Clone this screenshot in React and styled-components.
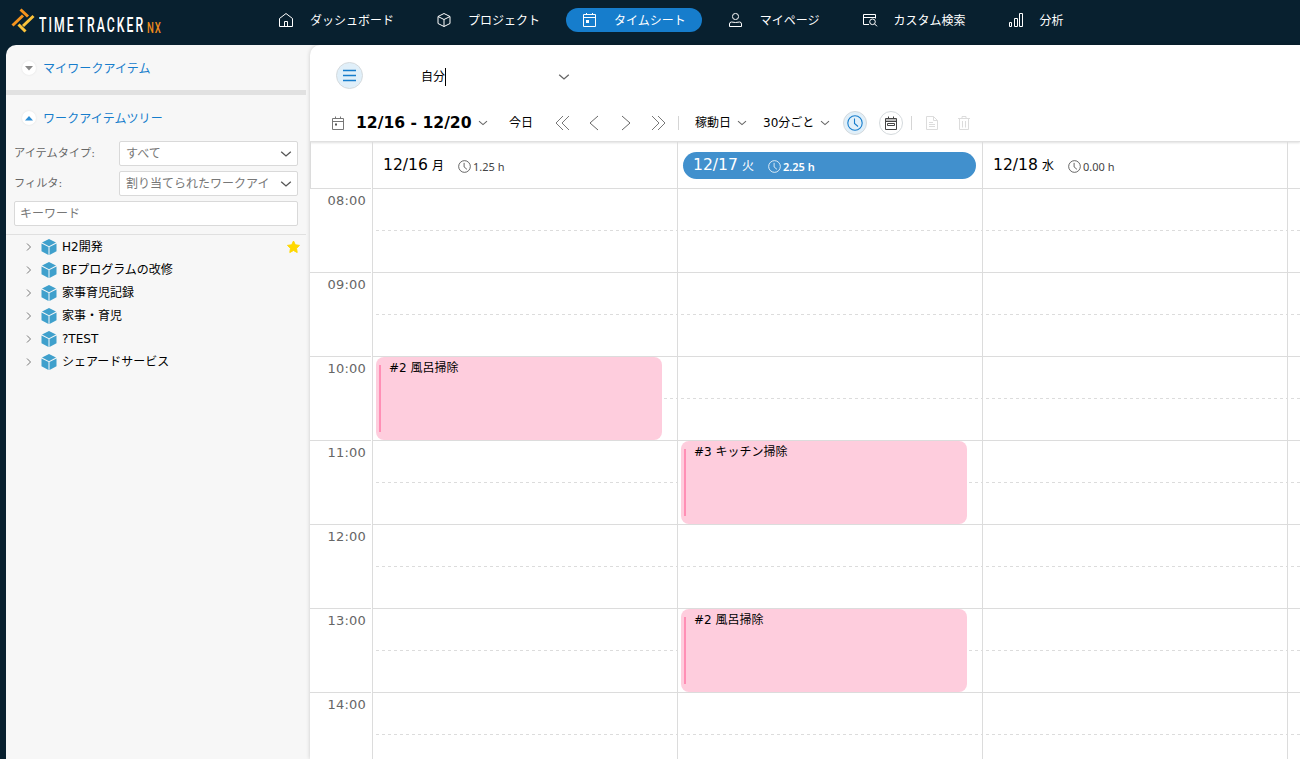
import React from 'react'
import styled, { createGlobalStyle, css } from 'styled-components'

const navItems = [
  { label: 'ダッシュボード', icon: 'home' },
  { label: 'プロジェクト', icon: 'cube' },
  { label: 'タイムシート', icon: 'calendar', active: true },
  { label: 'マイページ', icon: 'user' },
  { label: 'カスタム検索', icon: 'search' },
  { label: '分析', icon: 'chart' },
]

const projects = [
  { name: 'H2開発', starred: true },
  { name: 'BFプログラムの改修' },
  { name: '家事育児記録' },
  { name: '家事・育児' },
  { name: '?TEST' },
  { name: 'シェアードサービス' },
]

const hours = ['08:00', '09:00', '10:00', '11:00', '12:00', '13:00', '14:00']

// row is the index of the hour where the event starts, 1 based
const days = [
  {
    date: '12/16',
    weekday: '月',
    total: '1.25 h',
    events: [{ title: '#2 風呂掃除', row: 3 }],
  },
  {
    date: '12/17',
    weekday: '火',
    total: '2.25 h',
    today: true,
    events: [
      { title: '#3 キッチン掃除', row: 4 },
      { title: '#2 風呂掃除', row: 6 },
    ],
  },
  { date: '12/18', weekday: '水', total: '0.00 h', events: [] },
  { events: [] },
]

const NavIcon = ({ name }) => (
  <Icon width="16" height="16" viewBox="0 0 16 16">
    {name === 'home' && (
      <>
        <path d="M1.500 6.500 8 1.500l6.500 5v8h-13z" />
        <path d="M6.500 14.500v-5h3v5" />
      </>
    )}
    {name === 'cube' && (
      <path d="M8 1.500 14 4.500v7L8 14.500 2 11.500v-7zM2 4.500l6 3 6-3M8 7.500v7" />
    )}
    {name === 'calendar' && (
      <>
        <path d="M1.500 2.500h12v12h-12zM1.500 5.500h12M4.500 1v2M10.500 1v2" />
        <path d="M4 8h3v3H4z" fill="currentColor" stroke="none" />
      </>
    )}
    {name === 'user' && (
      <>
        <rect x="4.500" y="1.500" width="6" height="6" rx="2.800" />
        <path d="M1.500 14.500v-2.500q0-2 2-2 4 1 8 0 2 0 2 2v2.500z" />
      </>
    )}
    {name === 'search' && (
      <>
        <path d="M7 12.500H1.500v-10h12v4M1.500 5.500h12" />
        <circle cx="10.500" cy="9.800" r="2.800" />
        <path d="m12.500 11.800 2.500 2.500" />
      </>
    )}
    {name === 'chart' && (
      <path d="M1.500 10.500h2v4h-2zM6.500 6.500h3v8h-3zM11.500 1.500h3v13h-3z" />
    )}
  </Icon>
)

const Chevron = ({ size = 10, color = '#666', weight = 1.1 }) => (
  <Icon
    width={size}
    height={size}
    viewBox="0 0 10 10"
    $color={color}
    $weight={weight}
  >
    <path d="m1 3.200 4 3.400 4-3.400" />
  </Icon>
)

const Clock = ({ size = 13, weight = 1 }) => (
  <Icon width={size} height={size} viewBox="0 0 16 16" $weight={weight}>
    <circle cx="8" cy="8" r="7.200" />
    <path d="M7.500 3.500v5l3.500 3" />
  </Icon>
)

const Cube = () => (
  <svg width="16" height="16" viewBox="0 0 16 16">
    <path d="M8 0 15 3.600 8 7.200 1 3.600z" fill="#3fa0cc" />
    <path d="M.5 4.500 7.500 8v8L.5 12.300z" fill="#3fa0cc" />
    <path d="M15.500 4.500 8.500 8v8l7-3.700z" fill="#3fa0cc" />
    <path d="M7.500 8h1v8h-1z" fill="#9fd0e6" />
  </svg>
)

const LogoMark = () => (
  <svg width="25" height="25" viewBox="0 0 25 25">
    <g fill="none" strokeWidth="3">
      <path d="M1.500 17.500 12 7.500M9.500 1.500l7.500 7" stroke="#f7941d" />
      <path d="m12 18 10.500-10M7.500 16.500l7 7" stroke="#fbc33b" />
    </g>
  </svg>
)

const Header = () => (
  <TopBar>
    <LogoBox>
      <LogoMark />
      <LogoText>TIME TRACKER</LogoText>
      <LogoSuffix>NX</LogoSuffix>
    </LogoBox>
    <Nav>
      {navItems.map((item) => (
        <NavItem key={item.label} $active={item.active}>
          <NavIcon name={item.icon} />
          <NavLabel>{item.label}</NavLabel>
        </NavItem>
      ))}
    </Nav>
  </TopBar>
)

const Sidebar = () => (
  <Side>
    <SectionTitle>
      <Toggle>
        <svg width="8" height="5" viewBox="0 0 8 5">
          <path d="M0 0h8L4 4.500z" fill="#888" />
        </svg>
      </Toggle>
      <span>マイワークアイテム</span>
    </SectionTitle>
    <Splitter />
    <SectionTitle>
      <Toggle>
        <svg width="8" height="5" viewBox="0 0 8 5">
          <path d="M0 4.500h8L4 0z" fill="#2e8fd6" />
        </svg>
      </Toggle>
      <span>ワークアイテムツリー</span>
    </SectionTitle>
    <Filters>
      <FilterRow>
        <FilterLabel>アイテムタイプ:</FilterLabel>
        <SelectBox>
          <span>すべて</span>
          <Chevron size={12} color="#555" />
        </SelectBox>
      </FilterRow>
      <FilterRow>
        <FilterLabel>フィルタ:</FilterLabel>
        <SelectBox>
          <span>割り当てられたワークアイ</span>
          <Chevron size={12} color="#555" />
        </SelectBox>
      </FilterRow>
      <Keyword placeholder="キーワード" />
    </Filters>
    <Tree>
      {projects.map((project) => (
        <TreeRow key={project.name}>
          <Icon width="6" height="10" viewBox="0 0 6 10" $color="#777">
            <path d="m1 1.500 3.500 3.500L1 8.500" />
          </Icon>
          <Cube />
          <TreeName>{project.name}</TreeName>
          {project.starred && (
            <svg width="14" height="14" viewBox="0 0 14 14">
              <path
                d="m7.500 1 1.800 3.800 4.200.6-3 2.900.7 4.200-3.700-2-3.700 2 .7-4.200-3-2.900 4.200-.6z"
                fill="#ffd800"
                stroke="#ffd800"
                strokeLinejoin="round"
              />
            </svg>
          )}
        </TreeRow>
      ))}
    </Tree>
  </Side>
)

const Toolbar = () => (
  <Tools>
    <UserRow>
      <RoundButton $size={27} $active>
        <Icon width="13" height="13" viewBox="0 0 13 13" $weight={1.4}>
          <path d="M0 1.500h13M0 6.500h13M0 11.500h13" />
        </Icon>
      </RoundButton>
      <UserPicker>
        <UserName>自分</UserName>
        <Chevron size={12} color="#666" />
      </UserPicker>
    </UserRow>
    <ControlRow>
      <Slot $width={25}>
        <Icon width="14" height="14" viewBox="0 0 14 14" $color="#777">
          <path d="M1.500 2.500h11v11h-11zM1.500 5.500h11M4.500.5v2M9.500.5v2" />
          <path d="M4 7.500h2v2H4z" fill="#555" stroke="none" />
        </Icon>
      </Slot>
      <Slot $width={122}>
        <Range>12/16 - 12/20</Range>
      </Slot>
      <Slot $width={31}>
        <Chevron />
      </Slot>
      <Slot $width={46}>今日</Slot>
      <Slot $width={33}>
        <Icon width="16" height="16" viewBox="0 0 16 16" $color="#777">
          <path d="M8 1 1 8l7 7M14 1 7 8l7 7" />
        </Icon>
      </Slot>
      <Slot $width={32}>
        <Icon width="12" height="16" viewBox="0 0 12 16" $color="#666">
          <path d="m10 1-8 7 8 7" />
        </Icon>
      </Slot>
      <Slot $width={30}>
        <Icon width="12" height="16" viewBox="0 0 12 16" $color="#666">
          <path d="m2 1 8 7-8 7" />
        </Icon>
      </Slot>
      <Slot $width={28}>
        <Icon width="16" height="16" viewBox="0 0 16 16" $color="#777">
          <path d="m8 1 7 7-7 7M2 1l7 7-7 7" />
        </Icon>
      </Slot>
      <Divider $gap={16} />
      <Slot $width={42}>稼動日</Slot>
      <Slot $width={26}>
        <Chevron />
      </Slot>
      <Slot $width={57}>30分ごと</Slot>
      <Slot $width={23}>
        <Chevron />
      </Slot>
      <Slot $width={36}>
        <RoundButton $size={24} $active>
          <Clock size={16} weight={1.1} />
        </RoundButton>
      </Slot>
      <Slot $width={32}>
        <RoundButton $size={24}>
          <Icon width="14" height="14" viewBox="0 0 14 14">
            <path d="M1.500 2.500h11v11h-11zM1.500 5.500h11M4.500.5v2M9.500.5v2M3.500 7.500h7v2h-7z" />
            <path
              d="M2 3h10v2H2z"
              opacity=".35"
              fill="currentColor"
              stroke="none"
            />
          </Icon>
        </RoundButton>
      </Slot>
      <Divider $gap={14} />
      <Slot $width={32}>
        <Icon width="12" height="14" viewBox="0 0 12 14" $color="#dcdcdc">
          <path d="M.5.5h7l4 4v9H.5zM7.500.5v4h4M3 6.500h4M3 8.500h6M3 10.500h6" />
        </Icon>
      </Slot>
      <Slot $width={16}>
        <Icon width="12" height="14" viewBox="0 0 12 14" $color="#dcdcdc">
          <path d="M0 2.500h12M4 2V.5h4V2M1.500 3v10.500h9V3M4.500 5v6.500M7.500 5v6.500" />
        </Icon>
      </Slot>
    </ControlRow>
  </Tools>
)

const Calendar = () => (
  <Board>
    <TimeColumn>
      <Corner />
      {hours.map((hour) => (
        <Hour key={hour}>{hour}</Hour>
      ))}
    </TimeColumn>
    {days.map((day, i) => (
      <Day key={i}>
        <DayHead>
          {day.date && (
            <DayPill $today={day.today}>
              <DayDate>{day.date}</DayDate>
              <Weekday>{day.weekday}</Weekday>
              <Worked $today={day.today}>
                <Clock />
                <Total>{day.total}</Total>
              </Worked>
            </DayPill>
          )}
        </DayHead>
        <Slots>
          {hours.map((hour, index) => (
            <HourCell key={hour} $row={index + 1} />
          ))}
          {day.events.map((event) => (
            <Event key={event.row} $row={event.row}>
              <EventBar />
              <span>{event.title}</span>
            </Event>
          ))}
        </Slots>
      </Day>
    ))}
  </Board>
)

const App = () => (
  <Page>
    <GlobalStyle />
    <Header />
    <Body>
      <Sidebar />
      <Main>
        <Toolbar />
        <Calendar />
      </Main>
    </Body>
  </Page>
)

export default App

const GlobalStyle = createGlobalStyle`
  * {
    box-sizing: border-box;
  }

  body {
    margin: 0;
    overflow: hidden;
  }
`

const Page = styled.div`
  width: 1300px;
  height: 759px;
  display: flex;
  flex-direction: column;
  overflow: hidden;
  background: #08202f;
  color: #000;
  font-family: 'DejaVu Sans', 'Noto Sans CJK JP', sans-serif;
  font-size: 12px;
  line-height: 18px;
  white-space: nowrap;
`

const Icon = styled.svg`
  flex: none;
  fill: none;
  color: ${({ $color }) => $color || 'inherit'};
  stroke: currentColor;
  stroke-width: ${({ $weight }) => $weight || 1};
`

const TopBar = styled.header`
  flex: none;
  height: 45px;
  display: flex;
`

const LogoBox = styled.div`
  width: 262px;
  display: flex;
  padding: 8px 0 0 11px;
`

const LogoText = styled.span`
  width: 104px;
  margin: 5px 0 0 3px;
  color: #fff;
  font-family: Roboto, sans-serif;
  font-size: 21px;
  font-weight: 500;
  line-height: 24px;
  letter-spacing: 3.500px;
  word-spacing: -5px;
  transform: scaleX(0.582);
  transform-origin: 0 0;
`

const LogoSuffix = styled.span`
  width: 18px;
  margin: 8px 0 0 4px;
  color: #f08c1c;
  font-family: Roboto, sans-serif;
  font-size: 15px;
  font-weight: 500;
  line-height: 24px;
  letter-spacing: 1.500px;
  transform: scaleX(0.64);
  transform-origin: 0 0;
`

const Nav = styled.nav`
  display: flex;
  gap: 10px;
  padding-top: 8px;
`

const NavItem = styled.div`
  height: 24px;
  display: flex;
  align-items: center;
  gap: 16px;
  padding: 0 16px;
  border-radius: 12px;
  color: #fff;
  background: ${({ $active }) => ($active ? '#167dcc' : 'transparent')};
`

const NavLabel = styled.span`
  padding-top: 2px;
`

const Body = styled.div`
  flex: 1;
  min-height: 0;
  display: flex;
  padding-left: 6px;
`

// runs a little under the main panel so its rounded corner shows the same grey
const Side = styled.aside`
  flex: none;
  width: 314px;
  margin-right: -10px;
  padding-right: 14px;
  border-radius: 10px 0 0 0;
  background: #f7f7f7;
`

const SectionTitle = styled.div`
  height: 45px;
  display: flex;
  align-items: center;
  gap: 7px;
  padding: 1px 0 0 16px;
  color: #167dcc;
  letter-spacing: 0.1px;

  span:last-child {
    padding-top: 1px;
  }
`

const Toggle = styled.span`
  width: 14px;
  height: 14px;
  display: flex;
  align-items: center;
  justify-content: center;
  border-radius: 50%;
  background: #fff;
  box-shadow: 0 0 2px #ddd;
`

const Splitter = styled.div`
  height: 5px;
  background: #e1e1e1;
`

const Filters = styled.div`
  display: flex;
  flex-direction: column;
  gap: 5px;
  padding: 1px 8px 8px;
  border-bottom: 1px solid #e0e0e0;
`

const FilterRow = styled.div`
  height: 25px;
  display: flex;
  align-items: center;
`

const FilterLabel = styled.span`
  width: 105px;
  color: #666;
  font-size: 11.200px;
`

const fieldBox = css`
  height: 25px;
  border: 1px solid #d9d9d9;
  border-radius: 2px;
  background: #fff;
  color: #777;
`

const SelectBox = styled.div`
  ${fieldBox}
  flex: 1;
  display: flex;
  align-items: center;
  justify-content: space-between;
  padding: 0 5px 0 6px;
`

const Keyword = styled.input`
  ${fieldBox}
  width: 100%;
  padding: 0 5px;
  font: inherit;

  &::placeholder {
    color: #777;
  }
`

const Tree = styled.div`
  display: flex;
  flex-direction: column;
`

const TreeRow = styled.div`
  height: 23px;
  display: flex;
  align-items: center;
  padding: 0 6px 0 20px;

  svg:first-child {
    margin-right: 9px;
  }
`

const TreeName = styled.span`
  flex: 1;
  padding-left: 5px;
`

const Main = styled.main`
  flex: 1;
  min-width: 0;
  display: flex;
  flex-direction: column;
  overflow: hidden;
  border-radius: 10px 0 0 0;
  background: #fff;
  box-shadow: 0 0 4px rgba(0, 0, 0, 0.18);
`

const Tools = styled.div`
  flex: none;
  height: 97px;
  border-bottom: 1px solid #e0e0e0;
  box-shadow: 0 1px 2px rgba(0, 0, 0, 0.12);
`

const UserRow = styled.div`
  height: 61px;
  display: flex;
  align-items: center;
  padding-left: 26px;
`

const RoundButton = styled.span`
  width: ${({ $size }) => $size}px;
  height: ${({ $size }) => $size}px;
  display: flex;
  align-items: center;
  justify-content: center;
  border: 1px solid #d5dadd;
  border-radius: 50%;
  color: ${({ $active }) => ($active ? '#167dcc' : '#444')};
  background: ${({ $active }) => ($active ? '#e0eff9' : '#fff')};
`

const UserPicker = styled.div`
  width: 207px;
  display: flex;
  align-items: center;
  justify-content: space-between;
  padding: 2px 0 0 58px;
`

const UserName = styled.span`
  border-right: 1px solid #000;
`

const ControlRow = styled.div`
  height: 34px;
  display: flex;
  align-items: center;
  padding-left: 21px;
`

const Slot = styled.div`
  flex: none;
  width: ${({ $width }) => $width}px;
  display: flex;
  align-items: center;
`

const Range = styled.span`
  font-size: 15.600px;
  font-weight: 700;
`

const Divider = styled.div`
  flex: none;
  width: 1px;
  height: 14px;
  margin-right: ${({ $gap }) => $gap}px;
  background: #d5d5d5;
`

const Board = styled.div`
  flex: 1;
  min-height: 0;
  display: flex;
`

const TimeColumn = styled.div`
  flex: none;
  width: 62px;
`

const Corner = styled.div`
  width: 61px;
  height: 47px;
  border-left: 1px solid #dcdcdc;
  border-bottom: 1px solid #dcdcdc;
`

const Hour = styled.div`
  width: 61px;
  height: 84px;
  padding: 3px 5px 0 0;
  border-bottom: 1px solid #dcdcdc;
  color: #666;
  font-size: 13px;
  letter-spacing: 0.2px;
  text-align: right;
`

const Day = styled.section`
  flex: none;
  width: 305px;
  border-left: 1px solid #dcdcdc;
`

const DayHead = styled.div`
  height: 47px;
  padding: 10px 6px 0 5px;
  border-bottom: 1px solid #dcdcdc;
`

const DayPill = styled.div`
  height: 27px;
  display: flex;
  align-items: center;
  padding-left: ${({ $today }) => ($today ? 10 : 5)}px;
  border-radius: 14px;
  color: ${({ $today }) => ($today ? '#fff' : '#000')};
  background: ${({ $today }) => ($today ? '#4190cd' : 'transparent')};
`

const DayDate = styled.span`
  width: 49px;
  padding-bottom: 1px;
  font-size: 15.600px;
`

const Weekday = styled.span`
  width: 26px;
  padding-top: 1px;
`

const Worked = styled.span`
  display: flex;
  align-items: center;
  gap: 2px;
  padding-top: 2px;
  color: ${({ $today }) => ($today ? '#fff' : '#444')};
  font-weight: ${({ $today }) => ($today ? 600 : 400)};
`

const Total = styled.span`
  font-family: 'Noto Sans', sans-serif;
  font-size: 11px;
`

const Slots = styled.div`
  display: grid;
  grid-template-rows: repeat(7, 84px);
  grid-template-columns: 100%;
`

// full line at the end of the hour, dashed line at the half
const HourCell = styled.div`
  grid-row: ${({ $row }) => $row};
  grid-column: 1;
  border-bottom: 1px solid #dcdcdc;
  background: repeating-linear-gradient(
      90deg,
      #dcdcdc 0 3px,
      transparent 3px 6px
    )
    3px 41px / 100% 1px no-repeat;
`

const Event = styled.div`
  grid-row: ${({ $row }) => $row};
  grid-column: 1;
  display: flex;
  gap: 8px;
  width: 286px;
  height: 83px;
  margin-left: 3px;
  padding: 2px 3px 0;
  border-radius: 8px;
  background: #fecddd;
`

const EventBar = styled.i`
  width: 2px;
  height: 67px;
  margin-top: 6px;
  background: #ff8fb5;
`
